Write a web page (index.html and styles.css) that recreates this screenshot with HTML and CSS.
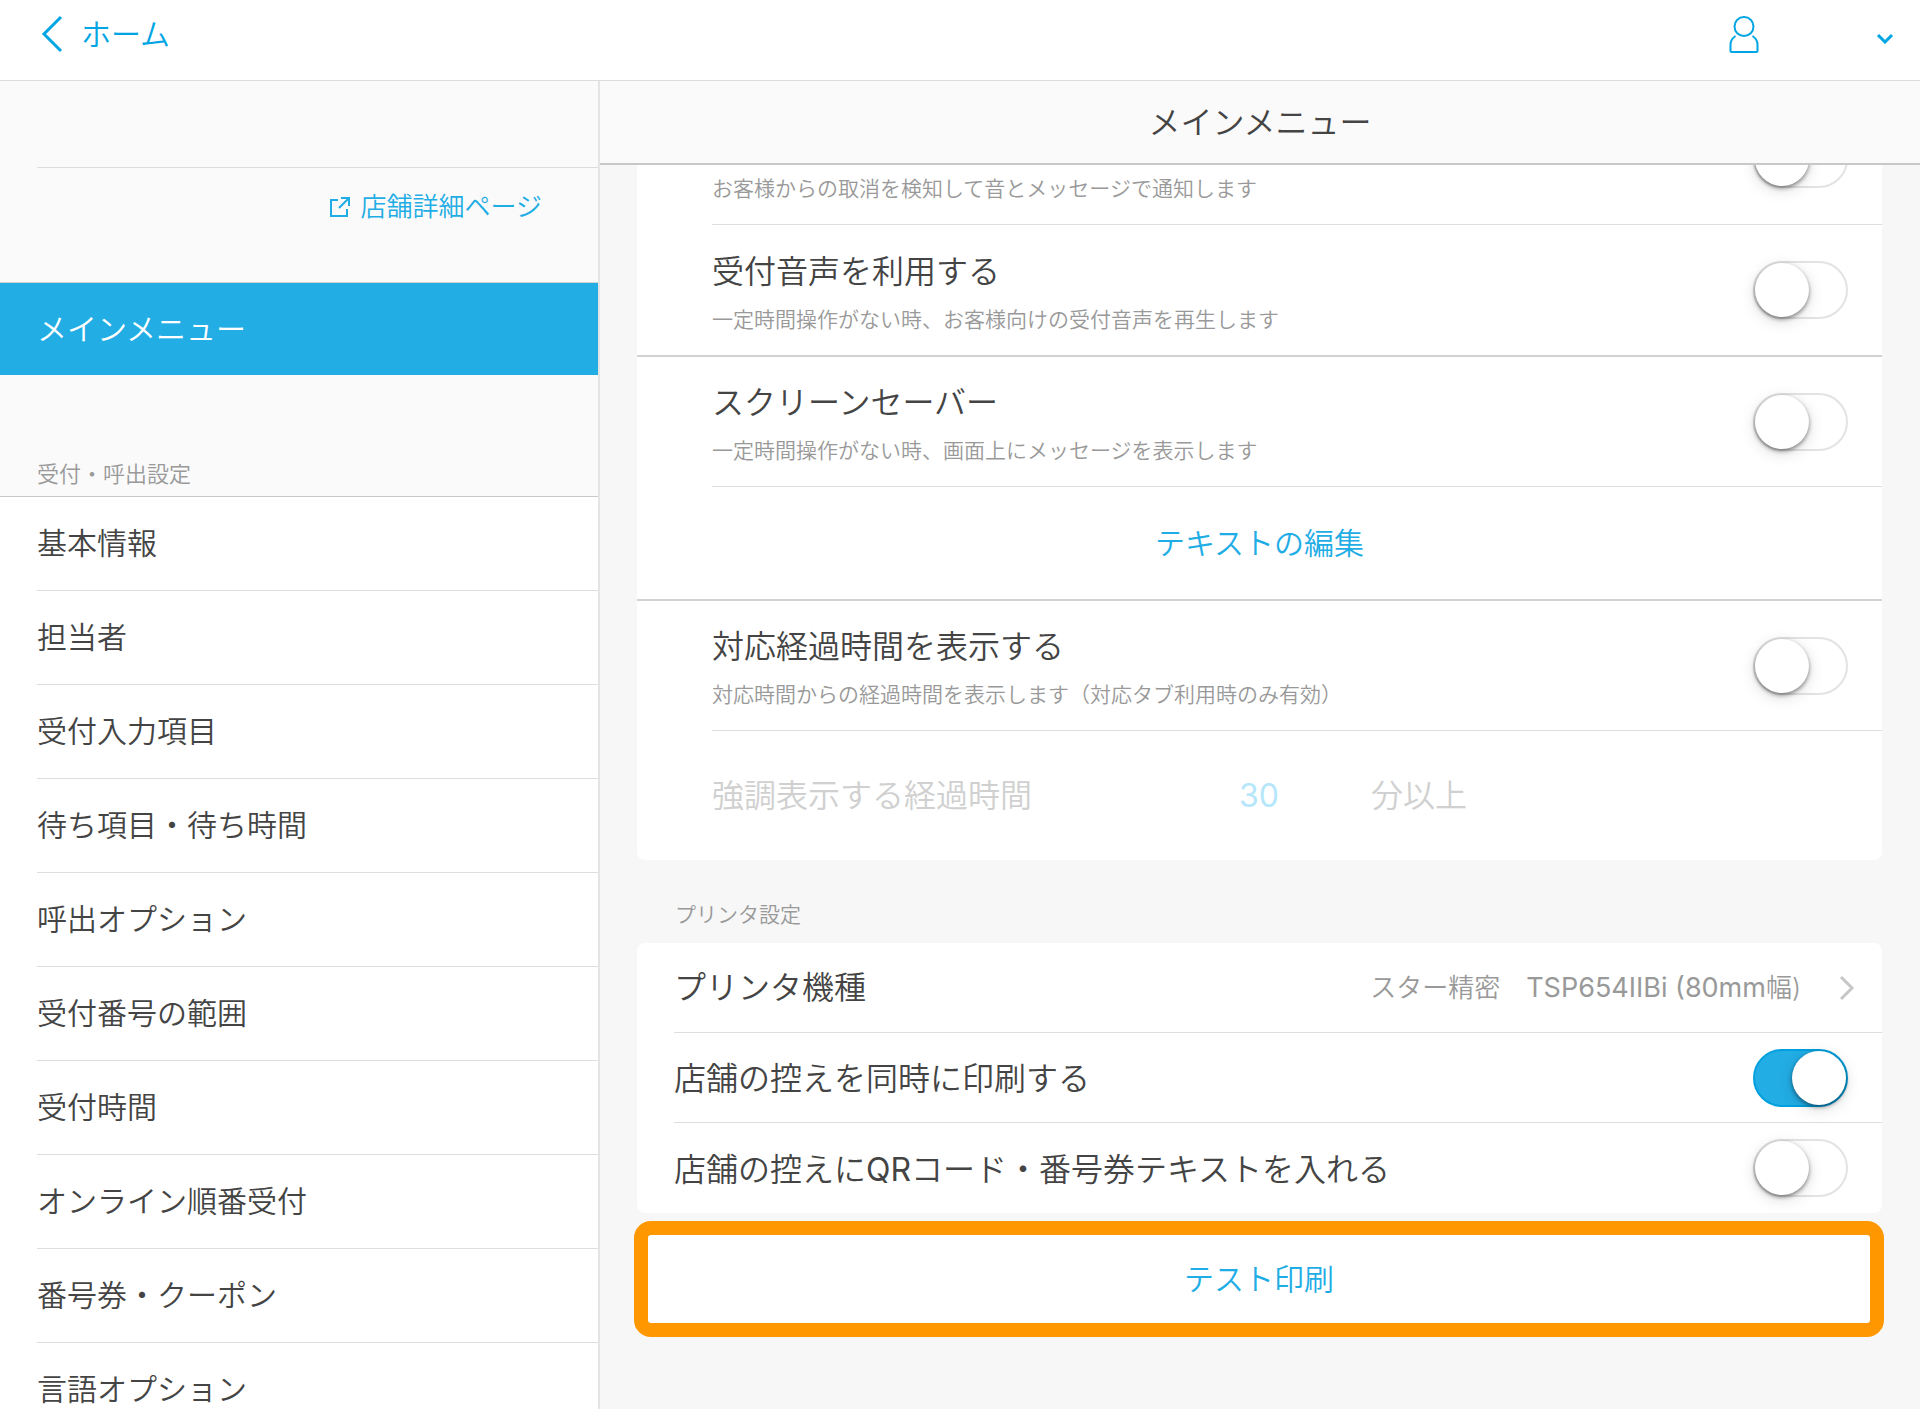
FILE: index.html
```html
<!DOCTYPE html>
<html lang="ja">
<head>
  <meta charset="UTF-8" />
  <meta name="viewport" content="width=device-width, initial-scale=1" />
  <title>メインメニュー</title>
  <link rel="stylesheet" href="styles.css">
</head>
<body>
  <!-- HEADER -->
  <header class="header">
    <a href="#" class="back-link">
      <svg width="22" height="38" viewBox="0 0 22 38" fill="none" stroke="currentColor" stroke-width="3"><path d="M20 2 3 19l17 17"/></svg>
      ホーム
    </a>
    <button type="button" class="user-menu" aria-label="アカウント">
      <svg width="30" height="38" viewBox="0 0 30 38" fill="none" stroke="currentColor" stroke-width="2">
        <circle cx="15" cy="11.500" r="9.500"/>
        <path d="M6.500 21C3.500 23 1.500 26 1.500 29.500v6q0 1.500 1.500 1.500h24q1.500 0 1.500-1.500v-6c0-3.500-2-6.500-5-8.500"/>
      </svg>
      <svg width="18" height="20" viewBox="0 0 18 20" fill="none" stroke="currentColor" stroke-width="3"><path d="M2 11l7 7 7-7"/></svg>
    </button>
  </header>

  <div class="layout">
    <!-- SIDEBAR -->
    <nav class="sidebar">
      <div class="shop-name"></div>
      <div class="shop-link">
        <a href="#">
          <svg width="22" height="22" viewBox="0 0 22 22" fill="none" stroke="currentColor" stroke-width="2"><path d="M9 4H2v16h16v-7M12 2h8v8M20 2 10 12"/></svg>
          店舗詳細ページ
        </a>
      </div>
      <a href="#" class="menu-main">メインメニュー</a>
      <h2 class="menu-heading">受付・呼出設定</h2>
      <ul class="menu-list">
        <li><a href="#">基本情報</a></li>
        <li><a href="#">担当者</a></li>
        <li><a href="#">受付入力項目</a></li>
        <li><a href="#">待ち項目・待ち時間</a></li>
        <li><a href="#">呼出オプション</a></li>
        <li><a href="#">受付番号の範囲</a></li>
        <li><a href="#">受付時間</a></li>
        <li><a href="#">オンライン順番受付</a></li>
        <li><a href="#">番号券・クーポン</a></li>
        <li><a href="#">言語オプション</a></li>
      </ul>
    </nav>

    <!-- SETTINGS -->
    <main class="main">
      <h1 class="main-title">メインメニュー</h1>
      <div class="main-content">
        <section class="card card-scrolled">
          <div class="row row-tall">
            <label for="cancel-notice">
              <span class="row-desc">お客様からの取消を検知して音とメッセージで通知します</span>
            </label>
            <input type="checkbox" class="switch" id="cancel-notice">
          </div>
          <div class="row row-tall group-end">
            <label for="voice">
              <span class="row-title">受付音声を利用する</span>
              <span class="row-desc">一定時間操作がない時、お客様向けの受付音声を再生します</span>
            </label>
            <input type="checkbox" class="switch" id="voice">
          </div>
          <div class="row row-tall group-start">
            <label for="screensaver">
              <span class="row-title">スクリーンセーバー</span>
              <span class="row-desc">一定時間操作がない時、画面上にメッセージを表示します</span>
            </label>
            <input type="checkbox" class="switch" id="screensaver">
          </div>
          <button type="button" class="row-button">テキストの編集</button>
          <div class="row row-tall group-start">
            <label for="elapsed">
              <span class="row-title">対応経過時間を表示する</span>
              <span class="row-desc">対応時間からの経過時間を表示します（対応タブ利用時のみ有効）</span>
            </label>
            <input type="checkbox" class="switch" id="elapsed">
          </div>
          <div class="row row-minutes">
            <label for="minutes">強調表示する経過時間</label>
            <input type="text" id="minutes" value="30" disabled>
            <span>分以上</span>
          </div>
        </section>

        <h2 class="card-heading">プリンタ設定</h2>
        <section class="card card-printer">
          <a href="#" class="row">
            <span class="row-label">プリンタ機種</span>
            <span class="row-value">スター精密　<span class="model">TSP654IIBi (80mm</span>幅)</span>
            <svg width="16" height="26" viewBox="0 0 16 26" fill="none" stroke="currentColor" stroke-width="3"><path d="M2 2l11 11L2 24"/></svg>
          </a>
          <div class="row">
            <label for="copy">店舗の控えを同時に印刷する</label>
            <input type="checkbox" class="switch" id="copy" checked>
          </div>
          <div class="row">
            <label for="qr">店舗の控えに<span class="latin">QR</span>コード・番号券テキストを入れる</label>
            <input type="checkbox" class="switch" id="qr">
          </div>
        </section>
        <button type="button" class="test-print">テスト印刷</button>
      </div>
    </main>
  </div>
</body>
</html>
```
FILE: styles.css
```css
* {
  box-sizing: border-box;
}
body {
  margin: 0;
  height: 100vh;
  display: flex;
  flex-direction: column;
  overflow: hidden;
  font-family: Inter, 'Noto Sans CJK JP', sans-serif;
  font-size: 32px;
  font-weight: 350;
  line-height: 48px;
  color: #444;
  background-color: #f7f7f7;
}
a {
  color: inherit;
  text-decoration: none;
}
button,
input {
  font: inherit;
  margin: 0;
  cursor: pointer;
}
h1,
h2,
ul {
  margin: 0;
  padding: 0;
  font-weight: 350;
  list-style: none;
}

/* Header */
.header {
  flex: none;
  height: 81px;
  padding: 0 26px 12px 41px;
  display: flex;
  align-items: center;
  justify-content: space-between;
  color: #00a5e3;
  background-color: #fff;
  border-bottom: 1px solid #dcdcdc;
}
.back-link {
  display: flex;
  align-items: center;
  gap: 18px;
  font-size: 30px;
}
.user-menu {
  width: 165px;
  padding: 0;
  display: flex;
  align-items: center;
  justify-content: space-between;
  border: none;
  background: none;
  color: inherit;
}

.layout {
  flex: 1;
  min-height: 0;
  display: flex;
}

/* Sidebar */
.sidebar {
  flex: none;
  width: 600px;
  overflow: hidden;
  font-size: 30px;
  background-color: #fafafa;
  border-right: 2px solid #e4e4e4;
}
.shop-name {
  height: 87px;
  margin-left: 37px;
  border-bottom: 1px solid #dcdcdc;
}
.shop-link {
  height: 115px;
  padding: 15px 56px 0 0;
  display: flex;
  justify-content: flex-end;
  font-size: 26px;
  color: #1fade5;
  border-bottom: 1px solid #d2d2d2;
}
.shop-link a {
  display: flex;
  align-items: center;
  gap: 10px;
  height: 48px;
}
.menu-main {
  display: block;
  padding: 22px 37px;
  color: #fff;
  background-color: #22ade5;
}
.menu-heading {
  padding: 83px 37px 6px;
  font-size: 22px;
  line-height: 32px;
  color: #999;
  border-bottom: 1px solid #c8c8c8;
}
.menu-list {
  padding-left: 37px;
  background-color: #fff;
}
.menu-list a {
  display: block;
  height: 94px;
  line-height: 93px;
  border-bottom: 1px solid #dedede;
}

/* Settings */
.main {
  flex: 1;
  min-width: 0;
  display: flex;
  flex-direction: column;
}
.main-title {
  flex: none;
  height: 84px;
  font-size: 32px;
  line-height: 84px;
  text-align: center;
  background-color: #fafafa;
  border-bottom: 2px solid #c8c8c8;
}
.main-content {
  flex: 1;
  min-height: 0;
  overflow: hidden;
  padding: 0 38px 0 37px;
}
.card {
  background-color: #fff;
  border-radius: 8px;
}
/* first row sits partly under the title bar */
.card-scrolled {
  margin-top: -71px;
  padding-left: 75px;
}
.row {
  display: flex;
  align-items: center;
  justify-content: space-between;
  height: 90px;
  padding-right: 34px;
  border-bottom: 1px solid #dedede;
}
.row-tall {
  height: 131px;
}
.row-tall label {
  flex: 1;
  align-self: flex-end;
  padding-bottom: 19px;
}
.row-title,
.row-desc {
  display: block;
}
.row-desc {
  margin-top: 8px;
  font-size: 21px;
  line-height: 32px;
  color: #999;
}
.group-end {
  height: 130px;
  border-bottom: none;
}
.group-start {
  margin-left: -75px;
  padding-left: 75px;
  border-top: 2px solid #d2d2d2;
  border-bottom: none;
}
.row-button {
  display: block;
  width: 100%;
  height: 113px;
  padding: 0 75px 0 0;
  font-size: 30px;
  color: #1fade5;
  border: none;
  border-top: 1px solid #dedede;
  background: none;
}
.row-minutes {
  height: 130px;
  justify-content: flex-start;
  color: #d0d0d0;
  border-top: 1px solid #dedede;
  border-bottom: none;
}
.row-minutes label {
  width: 497px;
}
.row-minutes input {
  width: 100px;
  margin-right: 62px;
  padding: 0;
  font-weight: 400;
  text-align: center;
  color: #b5e6fa;
  border: none;
  background: none;
}
.card-heading {
  padding: 39px 38px 12px;
  font-size: 21px;
  line-height: 32px;
  color: #999;
}
.card-printer {
  padding-left: 37px;
}
.card-printer label {
  padding-top: 3px;
}
.card-printer .row:last-child {
  border-bottom: none;
}
.row-value {
  margin-left: auto;
  font-size: 26px;
  color: #999;
}
.model {
  font-size: 27px;
  font-weight: 400;
}
.latin {
  font-weight: 400;
}
.row svg {
  margin: 0 -7px 0 38px;
  color: #c7c7c7;
}

/* Switch */
.switch {
  appearance: none;
  flex: none;
  width: 95px;
  height: 58px;
  padding: 0;
  border: 2px solid #e3e3e3;
  border-radius: 29px;
  background-color: #fff;
}
.switch::before {
  content: '';
  display: block;
  width: 54px;
  height: 54px;
  border-radius: 50%;
  background-color: #fff;
  box-shadow: 0 2px 4px rgba(0, 0, 0, 0.45), 0 4px 16px rgba(0, 0, 0, 0.14);
}
.switch:checked {
  border-color: #00a0de;
  background-color: #22ade5;
}
.switch:checked::before {
  margin-left: auto;
}

.test-print {
  display: block;
  width: calc(100% + 5px);
  height: 116px;
  margin: 8px -3px 0;
  padding: 0;
  font-size: 30px;
  color: #1fade5;
  background-color: #fff;
  border: 14px solid #ff9800;
  border-radius: 17px;
}
```
